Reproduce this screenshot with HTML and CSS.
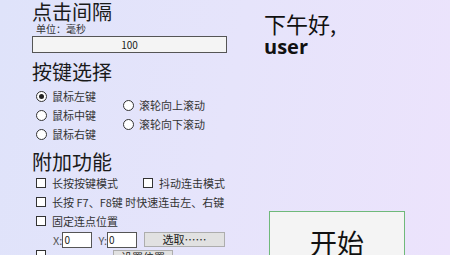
FILE: index.html
```html
<!DOCTYPE html>
<html lang="zh-CN">
<head>
    <meta charset="UTF-8">
    <title>连点器</title>
    <link rel="stylesheet" href="styles.css">
</head>
<body>
    <div class="window">
        <div class="left">
            <h2 class="title">点击间隔</h2>
            <div class="unit">单位：毫秒</div>
            <input class="interval" type="text" value="100">

            <h2 class="title">按键选择</h2>
            <div class="keys">
                <div class="col">
                    <label class="radio"><span class="dot checked"></span>鼠标左键</label>
                    <label class="radio"><span class="dot"></span>鼠标中键</label>
                    <label class="radio"><span class="dot"></span>鼠标右键</label>
                </div>
                <div class="col col2">
                    <label class="radio"><span class="dot"></span>滚轮向上滚动</label>
                    <label class="radio"><span class="dot"></span>滚轮向下滚动</label>
                </div>
            </div>

            <h2 class="title">附加功能</h2>
            <div class="row">
                <label class="check w1"><span class="box"></span>长按按键模式</label>
                <label class="check"><span class="box"></span>抖动连击模式</label>
            </div>
            <div class="row">
                <label class="check"><span class="box"></span>长按 F7、F8键 时快速连击左、右键</label>
            </div>
            <div class="row">
                <label class="check"><span class="box"></span>固定连点位置</label>
            </div>
            <div class="row pos">
                <span class="axis">X:</span><input class="coord" type="text" value="0">
                <span class="axis ay">Y:</span><input class="coord" type="text" value="0">
                <button class="pick">选取……</button>
            </div>
            <div class="row last">
                <span class="box"></span>
                <button class="setpos">设置位置</button>
            </div>
        </div>
        <div class="right">
            <div class="greet">下午好,</div>
            <div class="user">user</div>
            <button class="start">开始</button>
        </div>
    </div>
</body>
</html>
```

FILE: styles.css
```css
html, body {
    margin: 0;
    height: 100%;
    overflow: hidden;
}
body {
    font-family: "Noto Sans CJK SC", "Noto Sans", sans-serif;
    color: #222;
    background: linear-gradient(100deg, #dfe3fa 0%, #e6e4fb 50%, #ece3fc 100%);
}
.window {
    display: flex;
    height: 255px;
}
.left {
    width: 204px;
    padding-left: 32px;
    flex-shrink: 0;
}
.title {
    margin: 0;
    font-size: 20px;
    font-weight: normal;
    line-height: 23px;
    color: #1a1a1a;
}
.unit {
    font-size: 10px;
    line-height: 11px;
    margin-left: 4px;
    color: #333;
}
.interval {
    display: block;
    box-sizing: border-box;
    width: 195px;
    height: 17px;
    margin: 2px 0 7px 0;
    padding: 0;
    border: 1px solid #555;
    background: #f4f4f4;
    font-family: "Noto Sans CJK SC", sans-serif;
    font-size: 10px;
    text-align: center;
    color: #222;
}
.keys {
    display: flex;
    margin: 4px 0 7px 4px;
}
.col {
    display: flex;
    flex-direction: column;
    gap: 1px;
}
.col2 {
    margin-left: 27px;
    margin-top: 9px;
}
.radio, .check {
    display: flex;
    align-items: center;
    font-size: 11px;
    line-height: 18px;
    color: #333;
    white-space: nowrap;
}
.dot {
    box-sizing: border-box;
    width: 11px;
    height: 11px;
    border: 1px solid #333;
    border-radius: 50%;
    background: #fff;
    margin-right: 5px;
    position: relative;
}
.dot.checked::after {
    content: "";
    position: absolute;
    left: 2px;
    top: 2px;
    width: 5px;
    height: 5px;
    border-radius: 50%;
    background: #222;
}
.row {
    display: flex;
    align-items: center;
    margin-left: 4px;
    height: 19px;
}
.row:nth-of-type(1) {
    margin-top: 5px;
}
.box {
    box-sizing: border-box;
    width: 10px;
    height: 10px;
    border: 1px solid #333;
    background: #fff;
    margin-right: 6px;
    flex-shrink: 0;
}
.w1 {
    width: 107px;
}
.pos {
    margin-left: 21px;
}
.axis {
    font-size: 11px;
    color: #555;
}
.ay {
    margin-left: 6px;
}
.coord {
    box-sizing: border-box;
    width: 30px;
    height: 16px;
    padding: 0 0 0 1px;
    border: 1px solid #555;
    background: #fff;
    font-family: "Noto Sans CJK SC", sans-serif;
    font-size: 10px;
    color: #222;
}
.pick {
    box-sizing: border-box;
    width: 81px;
    height: 15px;
    margin-left: 7px;
    padding: 0;
    border: 1px solid #adadad;
    background: #e1e1e1;
    font-family: "Noto Sans CJK SC", sans-serif;
    font-size: 11px;
    line-height: 13px;
    color: #222;
}
.last {
    margin-top: 1px;
    align-items: flex-start;
}
.setpos {
    box-sizing: border-box;
    width: 60px;
    height: 15px;
    margin-left: 61px;
    padding: 0;
    border: 1px solid #adadad;
    background: #e1e1e1;
    font-family: "Noto Sans CJK SC", sans-serif;
    font-size: 11px;
    line-height: 13px;
    color: #222;
}
.right {
    flex: 1;
    padding-left: 28px;
    display: flex;
    flex-direction: column;
}
.greet {
    margin-top: 10px;
    font-size: 22px;
    line-height: 27px;
    color: #111;
}
.user {
    font-family: "Open Sans", "Noto Sans", sans-serif;
    font-weight: bold;
    font-size: 20px;
    line-height: 20px;
    color: #111;
}
.start {
    box-sizing: border-box;
    width: 136px;
    height: 60px;
    margin-top: 154px;
    margin-left: 5px;
    padding: 2px 0 0 0;
    border: 1px solid #6fb97a;
    background: #f4f4f4;
    font-family: "Noto Sans CJK SC", sans-serif;
    font-size: 27px;
    color: #111;
    align-self: flex-start;
    flex-shrink: 0;
}
```
